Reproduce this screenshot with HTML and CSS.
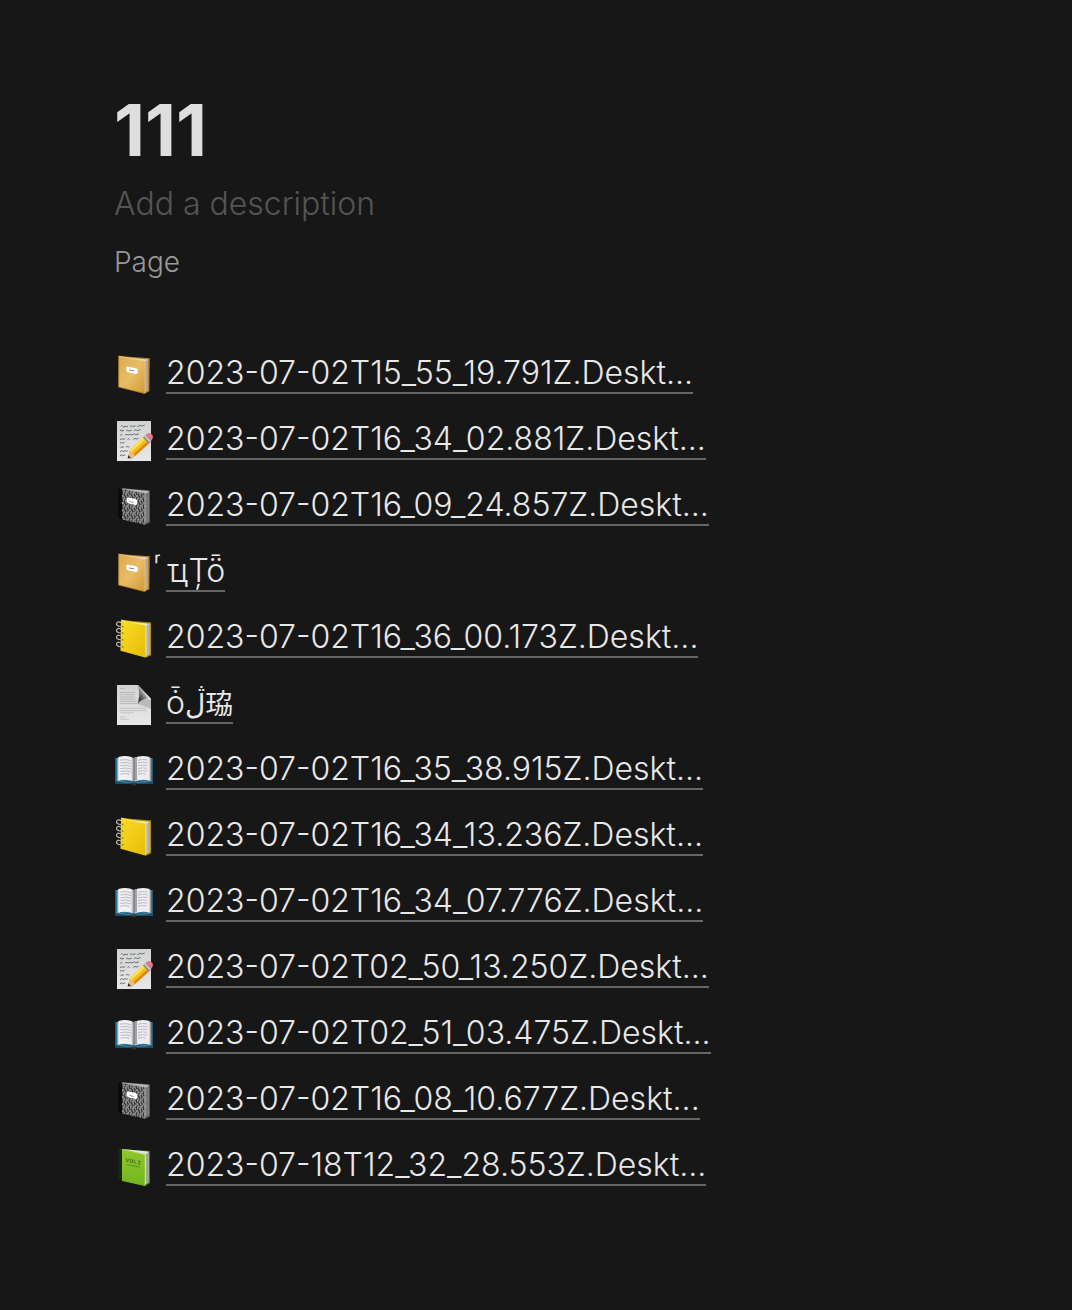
FILE: index.html
```html
<!DOCTYPE html>
<html lang="en">

<head>
    <meta charset="UTF-8">
    <meta name="viewport" content="width=device-width, initial-scale=1.0">
    <title>111</title>
    <link rel="stylesheet" href="styles.css">
</head>

<body>
    <!-- Icon shapes used by the list -->
    <svg class="icon-defs" aria-hidden="true">
        <defs>
            <linearGradient id="gold" x1="0" y1="0" x2="1" y2="1">
                <stop offset="0" stop-color="#d9a94f"/>
                <stop offset="0.5" stop-color="#e9bd66"/>
                <stop offset="1" stop-color="#d09a38"/>
            </linearGradient>
            <linearGradient id="lime" x1="0" y1="0" x2="0" y2="1">
                <stop offset="0" stop-color="#8ec92c"/>
                <stop offset="1" stop-color="#72b41f"/>
            </linearGradient>
            <linearGradient id="yellow" x1="0" y1="0" x2="1" y2="1">
                <stop offset="0" stop-color="#fbdc22"/>
                <stop offset="1" stop-color="#e6bc0a"/>
            </linearGradient>
            <linearGradient id="paper" x1="0" y1="0" x2="0" y2="1">
                <stop offset="0" stop-color="#d0d2d3"/>
                <stop offset="1" stop-color="#e8e8e8"/>
            </linearGradient>
            <linearGradient id="leaf" x1="0" y1="0" x2="1" y2="0">
                <stop offset="0" stop-color="#f4f4f6"/>
                <stop offset="0.8" stop-color="#eeeef2"/>
                <stop offset="1" stop-color="#9c9ca2"/>
            </linearGradient>
            <linearGradient id="curl" x1="0" y1="1" x2="1" y2="0">
                <stop offset="0.2" stop-color="#3f3f3f"/>
                <stop offset="0.45" stop-color="#8a8a8a"/>
                <stop offset="0.6" stop-color="#f0f0f0"/>
            </linearGradient>
            <pattern id="speckle" width="7" height="7" patternUnits="userSpaceOnUse">
                <rect width="7" height="7" fill="#5a5a5a"/>
                <path d="M0 1h1M2 0h1M4 1h2M1 3h2M5 3h1M0 5h1M3 5h1M5 6h2M2 6h1" stroke="#b5b5b5" stroke-width="1"/>
                <path d="M3 2h1M6 2h1M4 4h1M1 6h1M1 1h1" stroke="#151515" stroke-width="1"/>
            </pattern>

            <symbol id="book-gold" viewBox="0 0 40 40">
                <path d="M5 2 35.7 4.3 35.3 37.3 31 39.5 29 30Z" fill="#b98425"/>
                <path d="M7 3 34 5.5 34 36 30 38 29 8Z" fill="#d9d9db"/>
                <path d="M31 7.5 34 6v30l-3 1.5Z" fill="#a9a9ad"/>
                <path d="M4.7 2 31 7.2V39.7L4.5 33Z" fill="url(#gold)"/>
                <path d="M4.7 2.2V33l26.3 6.5" fill="none" stroke="#b47d1e" stroke-width="0.8"/>
                <path d="M4.7 2 31 7.2V39" fill="none" stroke="#f4d48c" stroke-width="0.6"/>
                <path d="M14 12.7 22 14.3q1.7.4 1.7 2v2.2q0 1.7-1.7 1.4l-8-1.7q-1.7-.5-1.7-2V14q0-1.6 1.7-1.3Z" fill="#fff"/>
                <path d="M15 16h1.4l.7.8.8-.5 2 .7" fill="none" stroke="#777" stroke-width="1"/>
            </symbol>

            <symbol id="book-speckled" viewBox="0 0 40 40">
                <path d="M5 2 36 4.3V36.5L31 38.7 8 33Z" fill="#555"/>
                <path d="M8 2.5 34.5 5V35L31 37 28 8Z" fill="#bdbdbd"/>
                <path d="M32 7.5 34.8 6v29.5l-2.8 1.7Z" fill="#777"/>
                <path d="M4.7 2 8.5 2.7V33.7L4.5 32.3Z" fill="#080808"/>
                <path d="M8 2.7 31.5 7.2V38.7L8 33.5Z" fill="url(#speckle)"/>
                <path d="M9 2.9 31 7.2V38" fill="none" stroke="#a4a4a4" stroke-width="0.7"/>
                <path d="M14.4 11.6 21.4 13q1.8.4 1.8 2v2.5q0 1.7-1.8 1.4l-7-1.6q-1.6-.4-1.6-2v-2.4q0-1.5 1.6-1.3Z" fill="#fff"/>
                <path d="M15.4 15.2l1.4.2.7.6 2 .4" fill="none" stroke="#888" stroke-width="1"/>
            </symbol>

            <symbol id="book-green" viewBox="0 0 40 40">
                <path d="M5 3 36 5V37.3L31 40 8 34Z" fill="#3f7614"/>
                <path d="M8 3 34.5 5.5V36.5L31 38.6 27 8Z" fill="#e2e2e2"/>
                <path d="M32 8 34.5 6.6v30l-2.5 1.6Z" fill="#a2a4a1"/>
                <path d="M4.7 3 8.5 4V35L4.5 34Z" fill="#142b0b"/>
                <path d="M8 3.5 31 8.6V40L8 35Z" fill="url(#lime)"/>
                <path d="M8 3.5 31 8.6V40" fill="none" stroke="#add95a" stroke-width="0.8"/>
                <path d="M12 12l1.4 4 1.4-3.4M16.3 13.4l2.2.5v2.7l-2.2-.5ZM20.3 13.6v3.3l1.9.4M24 15l2 .2-.1 1.4-1.9 1.2 2.3.6" fill="none" stroke="#4b7212" stroke-width="0.9"/>
                <path d="M12.5 18.5 26 21.3" stroke="#568a18" stroke-width="0.9"/>
            </symbol>

            <symbol id="notebook" viewBox="0 0 40 40">
                <path d="M7 2 37 4.6V37.2L32 39.6 28 30Z" fill="#b59000"/>
                <path d="M10 3.3 35.3 5.8V36L32 38 28 8Z" fill="#e6e6e2"/>
                <path d="M32.3 7.5 35.3 6v30l-3 1.7Z" fill="#b4b4b0"/>
                <path d="M7 2 31.8 7.4V39.7L6.5 32.8Z" fill="url(#yellow)"/>
                <path d="M7 2 31.8 7.4V39" fill="none" stroke="#ffef70" stroke-width="0.7"/>
                <g fill="none" stroke="#c4bb9c" stroke-width="1.2">
                    <path d="M8.5 5.5Q4 2.5 2.7 5.2T7.8 8.7"/>
                    <path d="M8.5 12Q4 9 2.7 11.7T7.8 15.2"/>
                    <path d="M8.5 18.8Q4 15.8 2.7 18.5T7.8 22"/>
                    <path d="M8.5 25.8Q4 22.8 2.7 25.5T7.8 29"/>
                </g>
                <path d="M8.3 8.5h1M8.3 15h1M8.3 21.8h1M8.3 28.8h1" stroke="#665200" stroke-width="1.4"/>
            </symbol>

            <symbol id="memo" viewBox="0 0 40 40" overflow="visible">
                <rect x="3" y="1" width="34" height="40" fill="url(#paper)"/>
                <g fill="none" stroke="#646464" stroke-width="0.9">
                    <path d="M7 6.5q1-2 2 0t2-.5l1 .8 2-.8M16 6.5l1.5-.7 1 .8 3-.7M23 6l1.4.5 1.4-1.2 2 .8 3-1"/>
                    <path d="M6 11l1.3-1.3.7 1.5 2-.8M12 11l1.5-1 1 1 3-.7M20 10.8l1.5-1 2 .7 3-.8"/>
                    <path d="M6 15.4l1.4-1 1 1M11 15.3l2-1.2 1 1 2-.8 1.4.8 3-1.2 1.5.8 3-1"/>
                    <path d="M6 19.6l2-1 1 .8 2.3-.8M13.5 19.4l1.5-.8 1 1M19 19.3l2-1 1 .8 2.5-.8"/>
                    <path d="M6 23.2l1.5-.8 1 .8 2-.7M6 27.6l1-1 1 .8 2-.6M12 27.2l2-.8 1.4.8"/>
                    <path d="M6 32l2-1.6.8 1.2 2-.7 3 .2M6 36.2l1.3-1.6 1 1.2 3-1"/>
                </g>
                <path d="m14 39 3 .3 21-18-4-2Z" fill="#777" opacity="0.45"/>
                <path d="m13.7 38.5 2-8.5 15-14.3 5.7 6.2-15.5 14Z" fill="#f6b91f"/>
                <path d="m15.7 30 15-14.3 2 2L17.4 32.2Z" fill="#ffdf4c"/>
                <path d="m19.5 34.2 15.2-14.1 1.7 1.8-15.5 14Z" fill="#d48b13"/>
                <path d="m13.7 38.5 2-8.5 1.8 2 2 2.2 1.4 1.7Z" fill="#e8bd83"/>
                <path d="m13.7 38.5.8-3.2 2.2 2.1Z" fill="#272727"/>
                <path d="m28.8 17.5 2.8-2.5 5.6 6-2.7 2.6Z" fill="#8497a0"/>
                <path d="m30.2 16.2 1-1 5.7 6-1 1Z" fill="#cad5d8"/>
                <path d="M31.4 15.1q3.5-3.6 6.3-.8t-.8 6.8Z" fill="#e97880"/>
            </symbol>

            <symbol id="page" viewBox="0 0 40 40" overflow="visible">
                <path d="M3 1H24L37 15V41H3Z" fill="url(#paper)"/>
                <path d="M24 14 37 16V25L24 20Z" fill="#888" opacity="0.4"/>
                <g stroke="#b5b5b5" stroke-width="0.9">
                    <path d="M6 4.5h5M6 8.5h15M6 10.7h15M6 13h15M6 15.2h16M6 17.4h17M6 19.6h20"/>
                    <path d="M6 24.4h26M6 26.6h27M6 28.8h14M6 33h6M6 35.3h9" stroke="#c1c1c1"/>
                </g>
                <path d="M23.7 1Q26.5 9 24 19.5 29 13.5 37 14.8Z" fill="url(#curl)"/>
            </symbol>

            <symbol id="book-open" viewBox="0 0 40 40">
                <path d="M1.3 8H38.7V34H22.5L20 35.3 17.5 34H1.3Z" fill="#2678a5"/>
                <path d="M1.3 31.5h37.4V34H22.5L20 35.3 17.5 34H1.3Z" fill="#174f70"/>
                <path d="M3 8h3v24l14 1 14-1V8h3v23l-15 1.4-2 1.2-2-1.2L3 31Z" fill="#9e9b90"/>
                <path d="M4.3 7Q13 4.5 20 8v23.6Q12 28.5 4.3 30.5Z" fill="url(#leaf)"/>
                <path d="M35.7 7Q27 4.5 20 8v23.6Q28 28.5 35.7 30.5Z" fill="#ececf1"/>
                <path d="M20 8q2-1 3-1v22.8q-2 .5-3 1.8Z" fill="#a1a1a8"/>
                <path d="M20 8v24" stroke="#68686d" stroke-width="0.9"/>
                <g fill="none" stroke="#b0b0b6" stroke-width="0.9">
                    <path d="M6.3 10.2q6-1.5 11 .6M6.3 13q6-1.5 11 .6M6.3 15.8q6-1.5 11 .6M6.3 18.6q6-1.5 11 .6M6.3 21.4q6-1.5 11 .6M6.3 24.2q6-1.5 9 .3"/>
                    <path d="M24 10.3q5-1.5 10-.1M24 13.1q5-1.5 10-.1M24 15.9q5-1.5 10-.1M24 18.7q5-1.5 9-.1M24 21.5q5-1.5 10-.1M24 24.3q5-1.5 8-.1" stroke-dasharray="4 .7"/>
                </g>
                <path d="M17 32.5q3 2 6 0l-.8 2.7h-4.4Z" fill="#2c3a25"/>
            </symbol>
        </defs>
    </svg>

    <main class="page">
        <h1 class="title">111</h1>
        <input class="description" type="text" placeholder="Add a description" aria-label="Description">
        <p class="type">Page</p>

        <ul class="links">
            <li><svg class="icon"><use href="#book-gold"/></svg><a href="#">2023-07-02T15_55_19.791Z.Deskt...</a></li>
            <li><svg class="icon"><use href="#memo"/></svg><a href="#">2023-07-02T16_34_02.881Z.Deskt...</a></li>
            <li><svg class="icon"><use href="#book-speckled"/></svg><a href="#">2023-07-02T16_09_24.857Z.Deskt...</a></li>
            <li><svg class="icon"><use href="#book-gold"/></svg><a href="#">&#x36C;ҵȚȫ</a></li>
            <li><svg class="icon"><use href="#notebook"/></svg><a href="#">2023-07-02T16_36_00.173Z.Deskt...</a></li>
            <li><svg class="icon"><use href="#page"/></svg><a href="#">ȱ<span class="small">ڷ珕</span></a></li>
            <li><svg class="icon"><use href="#book-open"/></svg><a href="#">2023-07-02T16_35_38.915Z.Deskt...</a></li>
            <li><svg class="icon"><use href="#notebook"/></svg><a href="#">2023-07-02T16_34_13.236Z.Deskt...</a></li>
            <li><svg class="icon"><use href="#book-open"/></svg><a href="#">2023-07-02T16_34_07.776Z.Deskt...</a></li>
            <li><svg class="icon"><use href="#memo"/></svg><a href="#">2023-07-02T02_50_13.250Z.Deskt...</a></li>
            <li><svg class="icon"><use href="#book-open"/></svg><a href="#">2023-07-02T02_51_03.475Z.Deskt...</a></li>
            <li><svg class="icon"><use href="#book-speckled"/></svg><a href="#">2023-07-02T16_08_10.677Z.Deskt...</a></li>
            <li><svg class="icon"><use href="#book-green"/></svg><a href="#">2023-07-18T12_32_28.553Z.Deskt...</a></li>
        </ul>
    </main>
</body>

</html>
```
FILE: styles.css
```css
body {
    margin: 0;
    background-color: #171717;
    color: #dedede;
    font-family: Inter, "Noto Sans", "DejaVu Sans", "Noto Sans CJK SC", sans-serif;
    font-weight: 300;
}

.icon-defs {
    position: absolute;
    width: 0;
    height: 0;
}

.page {
    padding: 86px 114px;
}

.title {
    margin: 0 0 10px;
    font-size: 72px;
    line-height: 88px;
    font-weight: 700;
}

.description {
    display: block;
    width: 100%;
    height: 40px;
    margin: 0 0 20px;
    padding: 0;
    border: none;
    outline: none;
    background: none;
    color: #dedede;
    font-family: inherit;
    font-weight: inherit;
    font-size: 32px;
    line-height: 40px;
}

.description::placeholder {
    color: #555;
    opacity: 1;
}

.type {
    margin: 0 0 61px;
    color: #999;
    font-size: 28px;
    line-height: 36px;
}

.links {
    margin: 0;
    padding: 0;
    list-style: none;
}

.links li {
    display: flex;
    align-items: center;
    gap: 12px;
    height: 66px;
}

.links a {
    border-bottom: 2px solid #666;
    color: #e8e8e8;
    font-size: 32px;
    line-height: 38px;
    text-decoration: none;
    white-space: nowrap;
}

.small {
    font-size: 28px;
    font-weight: 400;
    line-height: 28px;
}

.icon {
    flex: none;
    width: 40px;
    height: 40px;
    overflow: visible;
}
```
